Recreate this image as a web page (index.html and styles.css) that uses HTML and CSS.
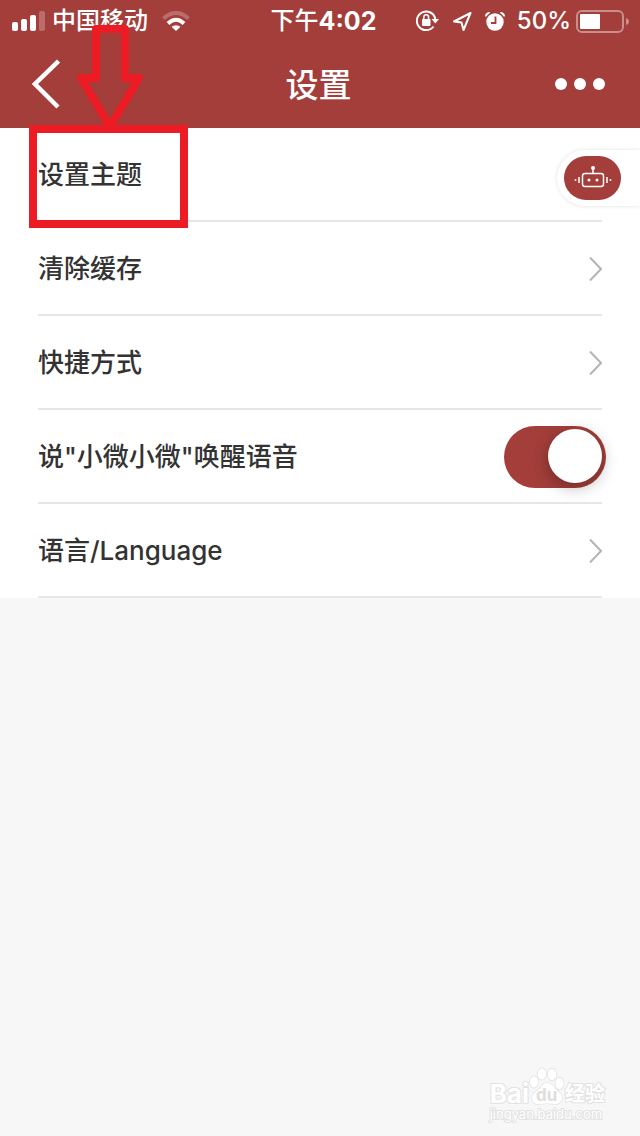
FILE: index.html
```html
<!DOCTYPE html>
<html lang="zh-CN">
<head>
    <meta charset="UTF-8">
    <meta name="viewport" content="width=device-width, initial-scale=1.0">
    <title>设置</title>
    <link rel="stylesheet" href="styles.css">
</head>
<body>
    <header class="header">
        <div class="status">
            <div class="status-left">
                <svg width="33" height="20" viewBox="0 0 33 20" fill="#fff">
                    <rect x="0" y="11" width="6" height="9" rx="2"/>
                    <rect x="9" y="8" width="6" height="12" rx="2"/>
                    <rect x="18" y="4" width="6" height="16" rx="2"/>
                    <rect x="27" y="0" width="6" height="20" rx="2" opacity=".25"/>
                </svg>
                <span class="carrier">中国移动</span>
                <svg width="28" height="20" viewBox="0 0 28 20" fill="none" stroke="#fff" stroke-width="4">
                    <path d="M1.500 7.500Q14 -3.500 26.500 7.500" opacity=".25"/>
                    <path d="M6 12.500Q14 5 22 12.500"/>
                    <path d="M14 20L9.500 15.800Q14 12.500 18.500 15.800Z" fill="#fff" stroke="none"/>
                </svg>
            </div>
            <div class="time"><span>下午</span><b>4:02</b></div>
            <div class="status-right">
                <svg width="23" height="22" viewBox="0 0 23 22">
                    <path d="M19.300 9A9.300 9.300 0 1 0 17.500 16.500" fill="none" stroke="#fff" stroke-width="2"/>
                    <path d="M15.500 9H23L19.300 13.500Z" fill="#fff"/>
                    <rect x="6" y="9" width="8.500" height="7" rx="1" fill="#fff"/>
                    <path d="M7.800 10V7.500a2.400 2.700 0 0 1 4.800 0V10" fill="none" stroke="#fff" stroke-width="1.500"/>
                </svg>
                <svg width="20" height="20" viewBox="0 0 20 20" fill="none" stroke="#fff" stroke-width="2" stroke-linejoin="round">
                    <path d="M18.500 2L2 10.500L9.500 11.500L11.500 19Z"/>
                </svg>
                <svg width="20" height="20" viewBox="0 0 20 20">
                    <circle cx="10" cy="11" r="8.700" fill="#fff"/>
                    <path d="M0 5.500Q0 1 5 1L4.500 2.500Q2.500 3.500 1.500 5.500ZM20 5.500Q20 1 15 1L15.500 2.500Q17.500 3.500 18.500 5.500Z" fill="#fff"/>
                    <path d="M10.500 5.500V12H6" fill="none" stroke="#a33e3a" stroke-width="1.800"/>
                </svg>
                <span class="percent">50%</span>
                <svg width="53" height="23" viewBox="0 0 53 23">
                    <rect x="1" y="1" width="46" height="21" rx="5" fill="none" stroke="#fff" stroke-width="2" opacity=".42"/>
                    <rect x="4" y="4" width="20" height="15" rx="1" fill="#fff"/>
                    <path d="M50 8Q53 9 53 11.500Q53 14 50 15Z" fill="#fff" opacity=".42"/>
                </svg>
            </div>
        </div>
        <nav class="nav">
            <button class="nav-btn back" aria-label="返回">
                <svg width="28" height="50" viewBox="0 0 28 50" fill="none" stroke="#fff" stroke-width="4.500">
                    <path d="M26.500 2L3 25L26 48"/>
                </svg>
            </button>
            <h1>设置</h1>
            <button class="nav-btn more" aria-label="更多">
                <svg width="50" height="12" viewBox="0 0 50 12" fill="#fff">
                    <circle cx="6" cy="6" r="6"/>
                    <circle cx="25" cy="6" r="6"/>
                    <circle cx="44" cy="6" r="6"/>
                </svg>
            </button>
        </nav>
    </header>

    <main class="list">
        <a class="row" href="#theme">
            <span class="label">设置主题</span>
        </a>
        <a class="row" href="#cache">
            <span class="label">清除缓存</span>
            <svg class="arrow" width="13" height="24" viewBox="0 0 13 24"><path d="M1 .5L12 12L1 23.500"/></svg>
        </a>
        <a class="row" href="#shortcut">
            <span class="label">快捷方式</span>
            <svg class="arrow" width="13" height="24" viewBox="0 0 13 24"><path d="M1 .5L12 12L1 23.500"/></svg>
        </a>
        <div class="row">
            <label class="label" for="wake">说"小微小微"唤醒语音</label>
            <input class="switch" type="checkbox" id="wake" checked>
        </div>
        <a class="row" href="#language">
            <span class="label">语言/Language</span>
            <svg class="arrow" width="13" height="24" viewBox="0 0 13 24"><path d="M1 .5L12 12L1 23.500"/></svg>
        </a>

        <div class="assistant">
            <button class="robot" aria-label="小微">
                <svg width="38" height="24" viewBox="0 0 38 24" fill="none" stroke="#fff" stroke-width="1.500">
                    <rect x="8.500" y="7.500" width="21" height="13" rx="2.500"/>
                    <path d="M19 3V7.500M5 11V17M33 11V17"/>
                    <g fill="#fff" stroke="none">
                        <circle cx="19" cy="2" r="2"/>
                        <circle cx="15" cy="14" r="1.500"/>
                        <circle cx="23" cy="14" r="1.500"/>
                        <circle cx="1.500" cy="14" r="1"/>
                        <circle cx="36.500" cy="14" r="1"/>
                    </g>
                </svg>
            </button>
        </div>
    </main>

    <!-- guide marks on top of the page -->
    <svg class="guide-arrow" width="68" height="106" viewBox="0 0 68 106" fill="none" stroke="#ed1c24" stroke-width="8" stroke-linejoin="round">
        <path d="M20 6H49V55H63L34 104L5 55H20Z"/>
    </svg>
    <div class="guide-box"></div>

    <div class="watermark">
        <div class="brand">
            <span>Bai</span>
            <span class="paw">
                <svg width="36" height="38" viewBox="0 0 36 38" fill="#fff" stroke="#dedede" stroke-width="1.200">
                    <ellipse cx="5" cy="15" rx="4.200" ry="5.800"/>
                    <ellipse cx="13" cy="7" rx="4.200" ry="5.800"/>
                    <ellipse cx="23" cy="7.500" rx="4.200" ry="5.800"/>
                    <ellipse cx="30.500" cy="16.500" rx="4.200" ry="5.800"/>
                    <path d="M18 16Q22 16 25 20C28 24 33 26 33 31Q32 38 25 37Q18 36 11 37Q3 38 3 31C3 26 9 24 12 20Q14 16 18 16Z"/>
                </svg>
                <i>du</i>
            </span>
            <span class="cn">经验</span>
        </div>
        <div class="site">jingyan.baidu.com</div>
    </div>
</body>
</html>
```

FILE: styles.css
```css
* {
    box-sizing: border-box;
}
body {
    position: relative;
    margin: 0;
    min-height: 100vh;
    background: #f7f7f7;
    color: #333;
    font-family: Inter, "Noto Sans CJK SC", sans-serif;
}
svg {
    display: block;
    flex: none;
}
button {
    padding: 0;
    border: none;
    background: none;
    cursor: pointer;
}

/* header */
.header {
    background: #a33e3a;
    color: #fff;
}
.status {
    display: grid;
    grid-template-columns: 1fr auto 1fr;
    align-items: center;
    height: 40px;
    padding: 1px 11px 0 12px;
    font-size: 24px;
    font-weight: 500;
    line-height: 40px;
}
.status-left, .status-right, .time {
    display: flex;
    align-items: center;
}
.carrier {
    margin: 0 14px 0 7px;
}
.time {
    padding-left: 6px;
}
.time b {
    font-size: 25px;
    font-weight: 700;
}
.status-right {
    justify-content: flex-end;
    gap: 13px;
}
.percent {
    margin: 0 -8px 0 -1px;
}
.nav {
    display: grid;
    grid-template-columns: 1fr auto 1fr;
    align-items: center;
    height: 88px;
    padding: 0 35px 0 32px;
}
.nav-btn {
    justify-self: start;
}
.nav h1 {
    margin: 0;
    padding-bottom: 2px;
    font-size: 33px;
    font-weight: 500;
}
.nav .more {
    justify-self: end;
}

/* settings list */
.list {
    position: relative;
    padding: 0 38px;
    background: #fff;
}
.row {
    display: flex;
    justify-content: space-between;
    align-items: center;
    height: 94px;
    padding-top: 2px;
    border-bottom: 2px solid #e6e6e6;
    color: #333;
    font-size: 26px;
    font-weight: 500;
    text-decoration: none;
}
.label {
    padding-bottom: 6px;
}
.arrow {
    fill: none;
    stroke: #b4b4b4;
    stroke-width: 2;
}
.switch {
    appearance: none;
    display: flex;
    justify-content: flex-end;
    width: 102px;
    height: 62px;
    margin: 0 -4px 0 0;
    padding: 3px 4px;
    border-radius: 31px;
    background: #a33e3a;
}
.switch::before {
    content: "";
    width: 54px;
    height: 54px;
    border-radius: 50%;
    background: #fff;
    box-shadow: 0 4px 16px rgba(0, 0, 0, 0.3);
}
.assistant {
    position: absolute;
    top: 22px;
    right: 0;
    padding: 6px 19px 6px 7px;
    border-radius: 28px 0 0 28px;
    background: #fff;
    box-shadow: 0 0 4px rgba(0, 0, 0, 0.12);
}
.robot {
    display: flex;
    justify-content: center;
    align-items: center;
    width: 57px;
    height: 44px;
    border-radius: 22px;
    background: #a33e3a;
}

/* guide marks */
.guide-arrow {
    position: absolute;
    top: 23px;
    left: 76px;
}
.guide-box {
    position: absolute;
    top: 125px;
    left: 29px;
    width: 159px;
    height: 103px;
    border: 8px solid #ed1c24;
}

/* watermark */
.watermark {
    position: absolute;
    right: 35px;
    bottom: 13px;
    color: #fff;
    -webkit-text-stroke: 2px #e2e2e2;
    paint-order: stroke fill;
}
.brand {
    display: flex;
    align-items: flex-end;
    font-size: 26px;
    font-weight: 700;
    line-height: 22px;
}
.paw {
    position: relative;
}
.paw i {
    position: absolute;
    bottom: 1px;
    left: 7px;
    color: #dedede;
    font-size: 17px;
    font-style: normal;
    line-height: 18px;
    -webkit-text-stroke: 0;
}
.cn {
    font-size: 20px;
}
.site {
    font-size: 13px;
    line-height: 18px;
}
```
